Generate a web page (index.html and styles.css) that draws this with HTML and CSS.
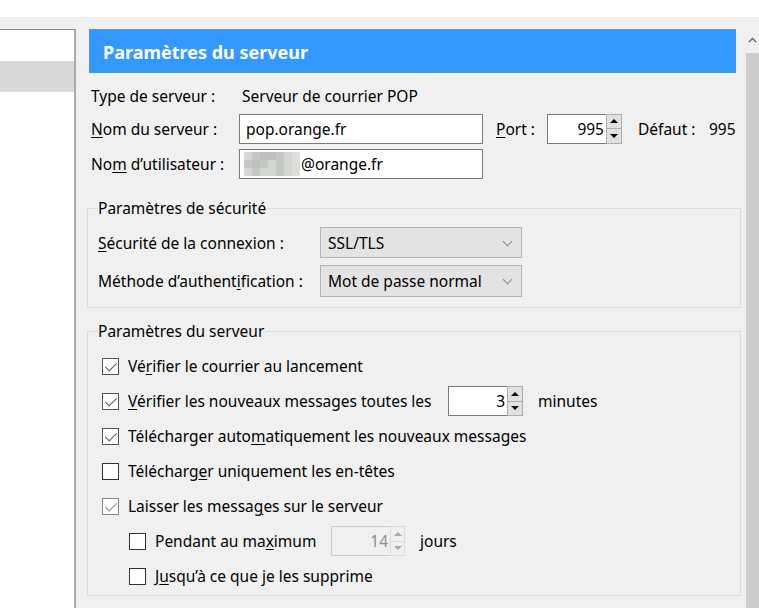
FILE: index.html
```html
<!DOCTYPE html>
<html lang="fr">
<head>
<meta charset="utf-8">
<title>Paramètres du serveur</title>
<link rel="stylesheet" href="styles.css">
</head>
<body>
<div class="topbar"></div>
<div class="main">
  <aside class="sidebar"><div class="side-sel"></div></aside>
  <section class="content">
    <div class="header">Paramètres du serveur</div>

    <div class="row r1">
      <span class="lbl">Type de serveur :</span>
      <span class="val">Serveur de courrier POP</span>
    </div>
    <div class="row r2">
      <span class="lbl"><u>N</u>om du serveur :</span>
      <div class="input wide">pop.orange.fr</div>
      <span class="port-lbl"><u>P</u>ort :</span>
      <div class="spin port">
        <div class="spin-val">995</div>
        <div class="spin-btns"><div class="sb up"></div><div class="sb down"></div></div>
      </div>
      <span class="def-lbl">Défaut :</span>
      <span>995</span>
    </div>
    <div class="row r3">
      <span class="lbl">No<u>m</u> d’utilisateur :</span>
      <div class="input wide user">
        <span class="mosaic">
          <i class="m1"></i><i class="m2"></i><i class="m3"></i><i class="m3"></i><i class="m2"></i><i class="m1"></i><i class="m4"></i>
          <i class="m2"></i><i class="m3"></i><i class="m2"></i><i class="m1"></i><i class="m2"></i><i class="m1"></i><i class="m4"></i>
          <i class="m1"></i><i class="m2"></i><i class="m1"></i><i class="m1"></i><i class="m2"></i><i class="m1"></i><i class="m4"></i>
        </span>@orange.fr
      </div>
    </div>

    <fieldset class="group g1">
      <legend>Paramètres de sécurité</legend>
      <div class="srow">
        <span class="slbl"><u>S</u>écurité de la connexion :</span>
        <div class="select">SSL/TLS<span class="chev"></span></div>
      </div>
      <div class="srow">
        <span class="slbl">Méthode d’authent<u>i</u>fication :</span>
        <div class="select">Mot de passe normal<span class="chev"></span></div>
      </div>
    </fieldset>

    <fieldset class="group g2">
      <legend>Paramètres du serveur</legend>
      <div class="crow">
        <span class="cb checked"></span><span>Vé<u>r</u>ifier le courrier au lancement</span>
      </div>
      <div class="crow">
        <span class="cb checked"></span><span class="fixlbl"><u>V</u>érifier les nouveaux messages toutes les</span>
        <div class="spin mins">
          <div class="spin-val">3</div>
          <div class="spin-btns"><div class="sb up"></div><div class="sb down"></div></div>
        </div>
        <span class="after">minutes</span>
      </div>
      <div class="crow">
        <span class="cb checked"></span><span>Télécharger auto<u>m</u>atiquement les nouveaux messages</span>
      </div>
      <div class="crow">
        <span class="cb"></span><span>Télécharg<u>e</u>r uniquement les en-têtes</span>
      </div>
      <div class="crow">
        <span class="cb checked light"></span><span>Laisser les messa<u>g</u>es sur le serveur</span>
      </div>
      <div class="crow indent">
        <span class="cb"></span><span class="fixlbl2">Pendant au ma<u>x</u>imum</span>
        <div class="spin days disabled">
          <div class="spin-val">14</div>
          <div class="spin-btns"><div class="sb up"></div><div class="sb down"></div></div>
        </div>
        <span class="after">jours</span>
      </div>
      <div class="crow indent">
        <span class="cb"></span><span>J<u>u</u>squ’à ce que je les supprime</span>
      </div>
    </fieldset>
  </section>
  <div class="scrollbar">
    <div class="sc-up"><svg width="9" height="6" viewBox="0 0 9 6"><path d="M1 5 L4.5 1.5 L8 5" fill="none" stroke="#606060" stroke-width="1.4"/></svg></div>
    <div class="sc-thumb"></div>
  </div>
</div>
</body>
</html>
```

FILE: styles.css
```css
* { box-sizing: border-box; }
html, body { margin: 0; padding: 0; }
body {
  width: 759px;
  height: 608px;
  overflow: hidden;
  background: #f0f0f0;
  font-family: "Noto Sans", "Open Sans", sans-serif;
  font-size: 15.5px;
  color: #000;
}
u { text-decoration: underline; text-underline-offset: 2px; text-decoration-thickness: 1px; }

.topbar { height: 17px; background: #fff; }

.main {
  display: flex;
  height: 591px;
  padding-top: 12px;
}

.sidebar {
  width: 76px;
  flex: none;
  background: #fff;
  border-top: 1px solid #8c8c8c;
  border-right: 2px solid #a9a9a9;
  padding-top: 31px;
}
.side-sel { height: 31px; background: #d9d9d9; }

.content {
  width: 654px;
  margin-left: 11px;
  flex: none;
}

.header {
  margin-left: 2px;
  width: 647px;
  height: 44px;
  background: #3399ff;
  border-top: 1px solid #7d8a99;
  border-left: 1px solid #7d8a99;
  color: #fff;
  font-weight: 700;
  font-size: 18px;
  padding-left: 13px;
  display: flex;
  align-items: center;
  padding-top: 1px;
}

.row {
  display: flex;
  align-items: center;
  padding-left: 4px;
  height: 30px;
  padding-top: 1px;
}
.r1 { margin-top: 7px; }
.r2 { margin-top: 3px; }
.r3 { margin-top: 5px; }
.lbl { width: 148px; flex: none; white-space: nowrap; }
.val { padding-left: 3px; }

.input {
  height: 30px;
  background: #fff;
  border: 1px solid #7a7a7a;
  padding-left: 6px;
  display: flex;
  align-items: center;
  white-space: nowrap;
}
.wide { width: 244px; }
.user { padding-left: 4px; }
.mosaic {
  display: inline-grid;
  grid-template-columns: repeat(7, 8px);
  grid-auto-rows: 8px;
  margin-right: 1px;
}
.mosaic i { display: block; }
.m1 { background: #d5d7d5; }
.m2 { background: #c6c8c6; }
.m3 { background: #bfc1bf; }
.m4 { background: #dcdedc; }

.port-lbl { margin-left: 13px; width: 51px; flex: none; }
.def-lbl { margin-left: 16px; width: 71px; flex: none; }

.spin { display: flex; height: 30px; flex: none; }
.spin-val {
  width: 59px;
  height: 30px;
  background: #fff;
  border: 1px solid #7a7a7a;
  border-right: none;
  display: flex;
  align-items: center;
  justify-content: flex-end;
  padding-right: 2px;
}
.spin-btns {
  width: 16px;
  display: flex;
  flex-direction: column;
  border: 1px solid #adadad;
  background: #e1e1e1;
}
.sb {
  flex: 1;
  display: flex;
  align-items: center;
  justify-content: center;
}
.sb.up { border-bottom: 1px solid #adadad; }
.sb::before {
  content: "";
  width: 0; height: 0;
  border-left: 4px solid transparent;
  border-right: 4px solid transparent;
}
.sb.up::before { border-bottom: 4px solid #000; }
.sb.down::before { border-top: 4px solid #000; }

.spin.disabled .spin-val { background: #f0f0f0; border-color: #cccccc; color: #8d8d8d; }
.spin.disabled .spin-btns { background: #f0f0f0; border-color: #dcdcdc; }
.spin.disabled .sb.up { border-bottom-color: #dcdcdc; }
.spin.disabled .sb.up::before { border-bottom-color: #a8a8a8; }
.spin.disabled .sb.down::before { border-top-color: #a8a8a8; }

.group {
  margin: 0;
  border: 1px solid #dcdcdc;
  padding: 0 0 0 10px;
  min-width: 0;
  width: 654px;
}
.group legend {
  padding: 0;
  line-height: 20px;
  height: 20px;
  color: #000;
}
.g1 { margin-top: 20px; padding-top: 8px; padding-bottom: 10px; }
.g2 { margin-top: 13px; padding-top: 7px; padding-bottom: 2px; }

.srow { display: flex; align-items: center; height: 32px; padding-top: 1px; }
.srow + .srow { margin-top: 6px; height: 33px; }
.slbl { width: 222px; flex: none; white-space: nowrap; }
.select {
  width: 202px;
  height: 100%;
  background: #e3e3e3;
  border: 1px solid #b3b3b3;
  display: flex;
  align-items: center;
  padding-left: 7px;
  position: relative;
}
.chev {
  margin-left: auto;
  margin-right: 8px;
  width: 12px;
  height: 8px;
  position: relative;
}
.chev::before {
  content: "";
  position: absolute;
  left: 3px; top: -1px;
  width: 6px; height: 6px;
  border-right: 1.3px solid #8a8a8a;
  border-bottom: 1.3px solid #8a8a8a;
  transform: rotate(45deg);
}

.crow { display: flex; align-items: center; height: 35px; padding-left: 4px; white-space: nowrap; padding-top: 1px; }
.crow.indent { padding-left: 31px; }
.cb {
  width: 17px;
  height: 17px;
  flex: none;
  border: 1px solid #333;
  background: #fff;
  margin-right: 9px;
  position: relative;
}
.cb.checked { border-color: #555; }
.cb.checked::after {
  content: "";
  position: absolute;
  left: 5px; top: 1px;
  width: 5px; height: 10px;
  border-right: 1.6px solid #595959;
  border-bottom: 1.6px solid #595959;
  transform: rotate(45deg);
}
.cb.light { border-color: #888; }
.cb.light::after { border-color: #8a8a8a; }
.fixlbl { width: 320px; flex: none; }
.fixlbl2 { width: 176px; flex: none; }
.spin.mins .spin-val { width: 59px; }
.spin.days .spin-val { width: 59px; }
.spin.days .spin-btns { width: 15px; }
.after { margin-left: 15px; }

.scrollbar {
  width: 13px;
  margin-left: 5px;
  flex: none;
  display: flex;
  flex-direction: column;
}
.sc-up { height: 24px; display: flex; justify-content: center; align-items: center; padding-bottom: 2px; }
.sc-thumb { flex: 1; background: #cdcdcd; }
```
